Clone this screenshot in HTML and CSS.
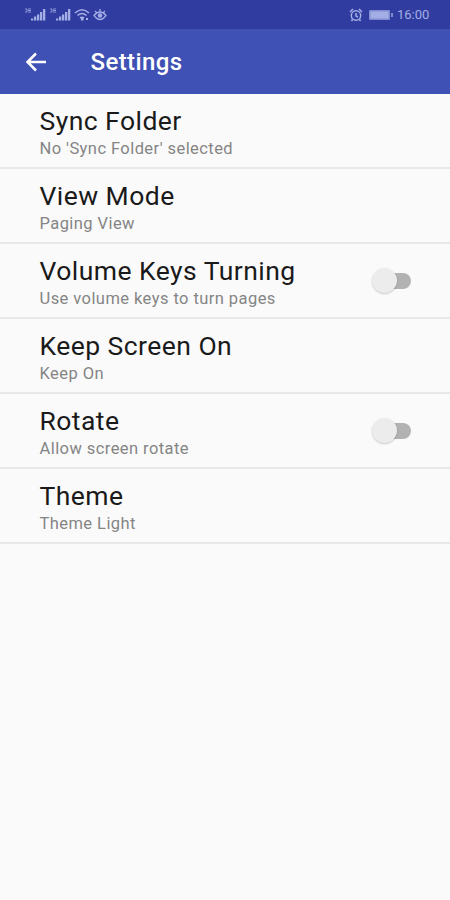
FILE: index.html
```html
<!DOCTYPE html>
<html lang="en">
<head>
  <meta charset="UTF-8" />
  <meta name="viewport" content="width=device-width, initial-scale=1" />
  <title>Settings</title>
  <link rel="stylesheet" href="styles.css">
</head>
<body>
  <!-- Status bar -->
  <div class="status-bar">
    <svg class="status-icons" width="86" height="16" viewBox="0 0 86 16" fill="currentColor">
      <g id="signal">
        <path d="M1 2h2v3H1M4 2h3M4 3.5h3M4 5h3" fill="none" stroke="currentColor" stroke-width=".8" />
        <path d="M7 11.500h2.300v2H7zM10 9.500h2.300v4H10zM13 7.500h2.300v6H13zM16 5h2.300v8.500H16zM19 2h2.300v11.500H19z" />
      </g>
      <use href="#signal" x="25" />
      <g fill="none" stroke="currentColor" stroke-width="1.600">
        <path d="M51 6q7-6.500 14 0M53.500 8.500q4.500-4 9 0M56 11q2-1.500 4 0" />
        <path d="M70 8.500q6-7 12 0q-6 8-12 0zM71 4l2 2M76 2v3M81 4l-2 2" stroke-width="1.300" />
      </g>
      <path d="M57 11h2.500v2.500H57zM62 11h2v2h-2z" />
      <circle cx="76" cy="8.500" r="2.200" />
    </svg>
    <div class="status-right">
      <svg width="14" height="14" viewBox="0 0 14 14" fill="none" stroke="currentColor" stroke-width="1.500">
        <circle cx="7" cy="7.500" r="4.700" />
        <path d="M7 5v3l2 1M1 4l3-3M13 4l-3-3M3.500 11.500l-1 1.500M10.500 11.500l1 1.500" />
      </svg>
      <svg width="24" height="10" viewBox="0 0 24 10" fill="currentColor">
        <rect width="21" height="10" rx="1" opacity=".7" />
        <rect x="1.500" y="1.500" width="18" height="7" />
        <rect x="22" y="3" width="2" height="4" opacity=".7" />
      </svg>
      <span class="clock">16:00</span>
    </div>
  </div>

  <!-- App bar -->
  <div class="app-bar">
    <svg class="back" width="22" height="20" viewBox="0 0 22 20" fill="none" stroke="currentColor" stroke-width="2.500">
      <path d="M21 10H3M11 1.500L2.500 10l8.500 8.500" />
    </svg>
    <h1>Settings</h1>
  </div>

  <!-- Preferences -->
  <div class="settings">
    <div class="row">
      <div>
        <div class="title">Sync Folder</div>
        <div class="summary">No 'Sync Folder' selected</div>
      </div>
    </div>
    <div class="row">
      <div>
        <div class="title">View Mode</div>
        <div class="summary">Paging View</div>
      </div>
    </div>
    <div class="row">
      <div>
        <div class="title">Volume Keys Turning</div>
        <div class="summary">Use volume keys to turn pages</div>
      </div>
      <div class="switch"><div class="thumb"></div></div>
    </div>
    <div class="row">
      <div>
        <div class="title">Keep Screen On</div>
        <div class="summary">Keep On</div>
      </div>
    </div>
    <div class="row">
      <div>
        <div class="title">Rotate</div>
        <div class="summary">Allow screen rotate</div>
      </div>
      <div class="switch"><div class="thumb"></div></div>
    </div>
    <div class="row">
      <div>
        <div class="title">Theme</div>
        <div class="summary">Theme Light</div>
      </div>
    </div>
  </div>
</body>
</html>
```
FILE: styles.css
```css
* {
  box-sizing: border-box;
}

body {
  margin: 0;
  min-height: 100vh;
  background: #fafafa;
  font-family: Roboto, "Liberation Sans", sans-serif;
}

.status-bar {
  display: flex;
  justify-content: space-between;
  align-items: center;
  height: 29px;
  padding: 1px 21px 0 24px;
  background: #303c9f;
  color: #a3ade6;
}

.status-right {
  display: flex;
  align-items: center;
}

.status-right svg + svg {
  margin-left: 6px;
}

.clock {
  width: 32px;
  margin-left: 4px;
  font-size: 13px;
  line-height: 16px;
  white-space: nowrap;
}

.app-bar {
  display: flex;
  align-items: center;
  height: 65px;
  padding: 0 25px;
  background: #3f51b5;
  color: #fff;
}

.app-bar h1 {
  margin: 1px 0 0 43.5px;
  font-size: 24px;
  font-weight: 500;
  line-height: 30px;
  letter-spacing: 0.4px;
}

.row {
  display: flex;
  justify-content: space-between;
  height: 75px;
  padding: 11px 39px 0 39.5px;
  border-bottom: 2px solid #e8e8e8;
}

.title {
  font-size: 26.5px;
  line-height: 32px;
  letter-spacing: 0.45px;
  color: #1a1a1a;
}

.summary {
  font-size: 16.5px;
  line-height: 24px;
  letter-spacing: 0.43px;
  color: #858585;
}

.switch {
  width: 36px;
  height: 16px;
  margin-top: 18px;
  border-radius: 8px;
  background: #b2b2b2;
}

.thumb {
  width: 25px;
  height: 25px;
  margin: -5px 0 0 -3px;
  border-radius: 50%;
  background: #ececec;
  box-shadow: 0 1px 2px rgba(0, 0, 0, 0.2);
}
```
